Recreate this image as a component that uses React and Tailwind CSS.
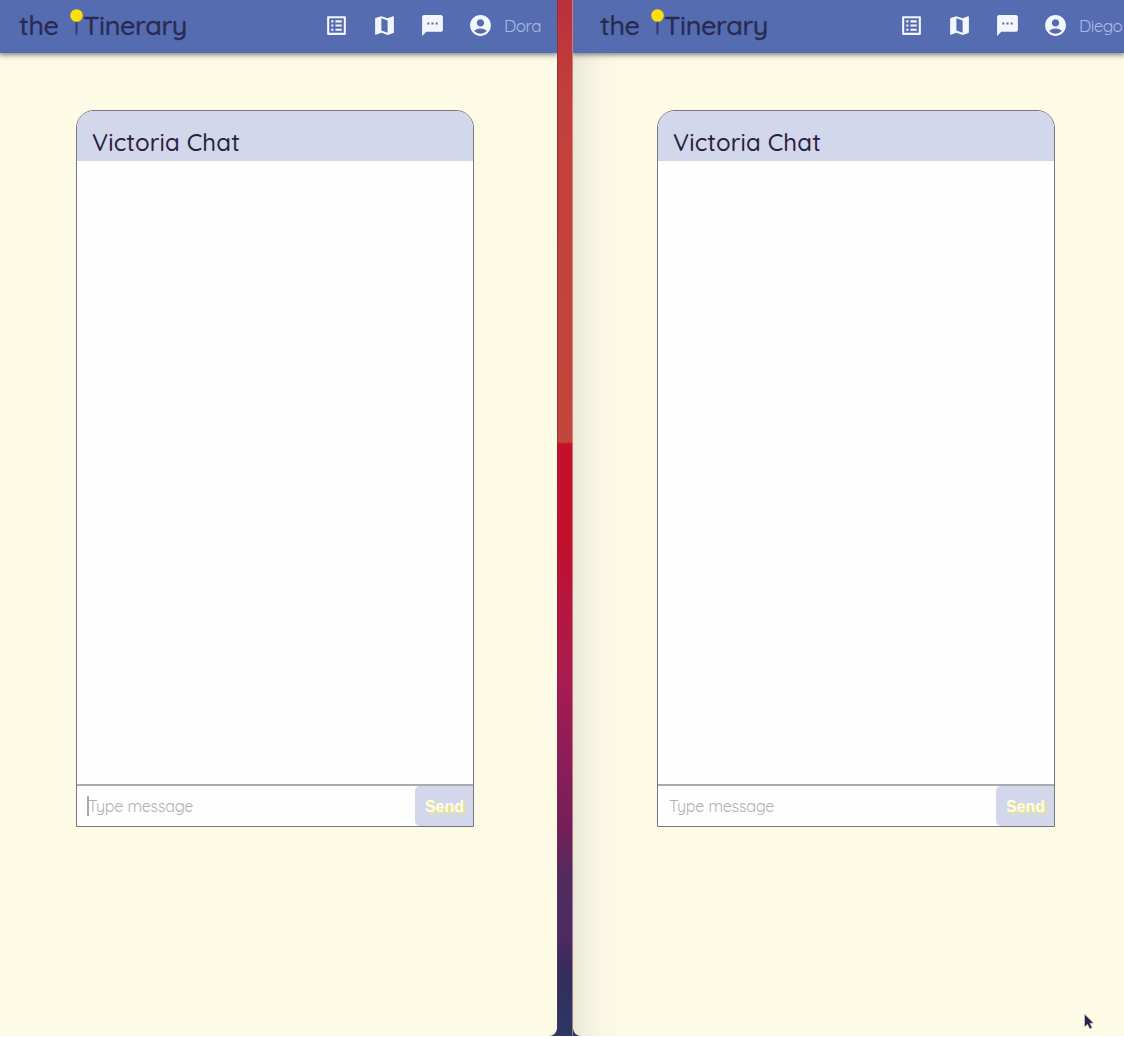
import { MdListAlt, MdMap, MdSms, MdAccountCircle } from "react-icons/md";

function Logo() {
  return (
    <div className="flex h-[53px] w-[170px] shrink-0 items-start text-[27px] leading-[50px] text-[#272b52] font-medium [-webkit-text-stroke:0.3px_#272b52]">
      <span className="w-[51px] shrink-0 tracking-[-0.4px]">the</span>
      <svg className="mt-[9px] h-[26px] w-[13px] shrink-0" viewBox="0 0 13 26">
        <path d="M6.5 12v13.5" stroke="#343a70" strokeWidth="2" />
        <circle cx="6.5" cy="6.5" r="6.3" fill="#ffde08" />
      </svg>
      <span className="tracking-[-0.4px]">Tinerary</span>
    </div>
  );
}

function Header({ name, className, iconsClass }) {
  return (
    <header className={`flex h-[53px] shrink-0 bg-[#566cb0] shadow-[0_1px_5px_1px_rgba(50,50,60,0.6)] ${className}`}>
      <Logo />
      <nav className={`flex h-[51px] shrink-0 items-center gap-[23px] text-[25px] text-[#f4f6fd] ${iconsClass}`}>
        <MdListAlt />
        <MdMap />
        <MdSms />
        <MdAccountCircle />
      </nav>
      <span className="ml-[11px] text-[17px] leading-[52px] font-normal tracking-[-0.55px] text-[#aabae8]">{name}</span>
    </header>
  );
}

function ChatCard({ focused, className }) {
  return (
    <section className={`mt-[57px] flex h-[717px] w-[398px] flex-col overflow-hidden rounded-t-[18px] border border-[#77757f] bg-[#fefefe] ${className}`}>
      <h1 className="h-[50px] shrink-0 bg-[#d2d7eb] pl-[15px] text-[24px] leading-[63px] font-medium tracking-[0.15px] text-[#29213f]">
        Victoria Chat
      </h1>
      <div className="flex-1" />
      <div className="flex h-[42px] shrink-0 border-t-2 border-[#aaa9ad]">
        <div className="flex flex-1 items-center pl-[10px] text-[16px] font-normal tracking-[-0.2px] text-[#b0b0b0]">
          <span className={focused ? "h-[20px] w-[2px] -mr-px bg-[#aaaaaa]" : "w-px"} />
          <span>Type message</span>
        </div>
        <button className="w-[58px] rounded-l-[5px] bg-[#d2d7eb] pt-px pl-px font-[Liberation_Sans] text-[16px] font-bold text-[#fbfbf3] [text-shadow:1px_1px_1px_#e9e58c,2px_2px_1px_#e9e58c]">
          Send
        </button>
      </div>
    </section>
  );
}

export default function App() {
  return (
    <div className="h-[1037px] bg-white">
      <div className="relative flex h-[1036px] w-[1124px] overflow-hidden bg-[linear-gradient(to_bottom,#bb303c_0px,#c2403a_100px,#c2463a_442px,#c4102a_444px,#c20f2c_540px,#b5163d_600px,#a81b50_680px,#8c1d58_760px,#731f58_830px,#502b60_880px,#4b2b60_940px,#352c5c_970px,#2c3763_1036px)] font-[Quicksand,Lato,sans-serif]">
        <main className="flex h-full w-[557px] shrink-0 flex-col overflow-hidden rounded-br-[8px] bg-[#fdfae6]">
          <Header name="Dora" className="pl-[19px]" iconsClass="ml-[135px]" />
          <ChatCard focused className="ml-[76px]" />
        </main>
        <div className="w-[16px] shrink-0 border-x border-l-[#64314f]/60 border-r-[#e7a9a5]/60" />
        <main className="flex h-full w-[551px] shrink-0 flex-col overflow-hidden rounded-bl-[8px] bg-[linear-gradient(to_right,#e9e7d5_0px,#f1efdd_12px,#faf7e5_30px,#fdfae6_50px)]">
          <Header name="Diego" className="pl-[27px]" iconsClass="ml-[129px]" />
          <ChatCard className="ml-[84px]" />
        </main>
        <svg className="absolute left-[1083px] top-[1013px] h-[18px] w-[14px]" viewBox="0 0 14 18">
          <path d="M1.5 1v13l3-2.6 2.4 4.6 2.3-1.2-2.2-4.4 3.5-.4z" fill="#2b2150" stroke="#dddacb" strokeWidth=".6" />
        </svg>
      </div>
    </div>
  );
}
